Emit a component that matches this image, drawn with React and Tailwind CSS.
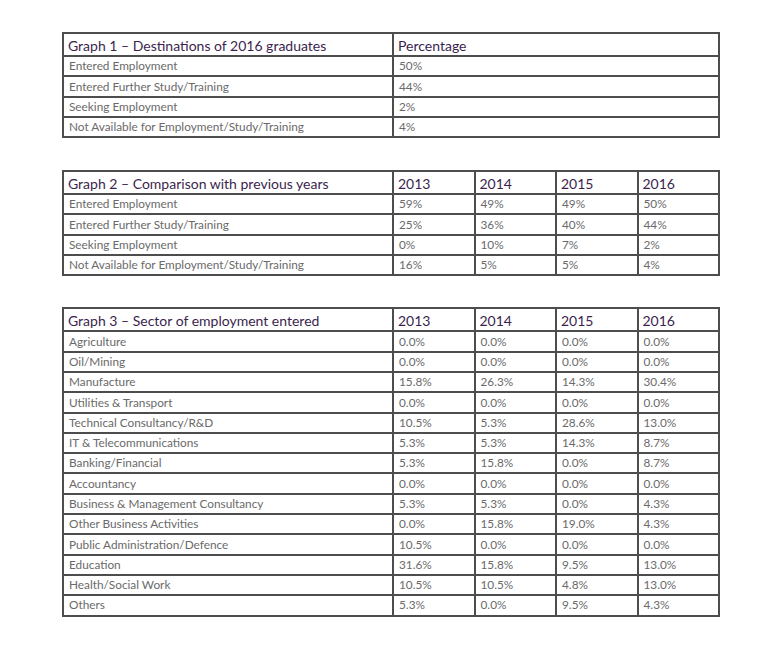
import React from 'react';

const years = ['2013', '2014', '2015', '2016'];

const graph1 = [
  ['Entered Employment', '50%'],
  ['Entered Further Study/Training', '44%'],
  ['Seeking Employment', '2%'],
  ['Not Available for Employment/Study/Training', '4%'],
];

const graph2 = [
  ['Entered Employment', '59%', '49%', '49%', '50%'],
  ['Entered Further Study/Training', '25%', '36%', '40%', '44%'],
  ['Seeking Employment', '0%', '10%', '7%', '2%'],
  ['Not Available for Employment/Study/Training', '16%', '5%', '5%', '4%'],
];

const graph3 = [
  ['Agriculture', '0.0%', '0.0%', '0.0%', '0.0%'],
  ['Oil/Mining', '0.0%', '0.0%', '0.0%', '0.0%'],
  ['Manufacture', '15.8%', '26.3%', '14.3%', '30.4%'],
  ['Utilities & Transport', '0.0%', '0.0%', '0.0%', '0.0%'],
  ['Technical Consultancy/R&D', '10.5%', '5.3%', '28.6%', '13.0%'],
  ['IT & Telecommunications', '5.3%', '5.3%', '14.3%', '8.7%'],
  ['Banking/Financial', '5.3%', '15.8%', '0.0%', '8.7%'],
  ['Accountancy', '0.0%', '0.0%', '0.0%', '0.0%'],
  ['Business & Management Consultancy', '5.3%', '5.3%', '0.0%', '4.3%'],
  ['Other Business Activities', '0.0%', '15.8%', '19.0%', '4.3%'],
  ['Public Administration/Defence', '10.5%', '0.0%', '0.0%', '0.0%'],
  ['Education', '31.6%', '15.8%', '9.5%', '13.0%'],
  ['Health/Social Work', '10.5%', '10.5%', '4.8%', '13.0%'],
  ['Others', '5.3%', '0.0%', '9.5%', '4.3%'],
];

const headCell = 'border-2 border-[#4d4d4d] h-[23px] px-[4px] pt-[2px] pb-0 text-left font-normal text-[14px] leading-none text-[#3b1f4e] align-middle';
const bodyCell = 'border-2 border-[#4d4d4d] h-[20.3px] px-[5px] py-0 text-left text-[11.8px] leading-none text-[#6a6a6a] align-middle';

const DataTable = ({ title, cols, rows, className }) => (
  <table className={`w-[658px] border-collapse table-fixed ${className || ''}`}>
    <colgroup>
      <col className="w-[330px]" />
      {cols.map((c) => (
        <col key={c} />
      ))}
    </colgroup>
    <thead>
      <tr>
        <th className={headCell}>{title}</th>
        {cols.map((c) => (
          <th key={c} className={headCell}>{c}</th>
        ))}
      </tr>
    </thead>
    <tbody>
      {rows.map((r) => (
        <tr key={r[0]}>
          {r.map((v, i) => (
            <td key={i} className={bodyCell}>{v}</td>
          ))}
        </tr>
      ))}
    </tbody>
  </table>
);

export default function App() {
  return (
    <div
      className="w-[780px] h-[659px] bg-white pl-[62px] pt-[32px]"
      style={{ fontFamily: 'Lato, "Open Sans", sans-serif' }}
    >
      <DataTable title="Graph 1 – Destinations of 2016 graduates" cols={['Percentage']} rows={graph1} />
      <DataTable title="Graph 2 – Comparison with previous years" cols={years} rows={graph2} className="mt-[32px]" />
      <DataTable title="Graph 3 – Sector of employment entered" cols={years} rows={graph3} className="mt-[31px]" />
    </div>
  );
}
